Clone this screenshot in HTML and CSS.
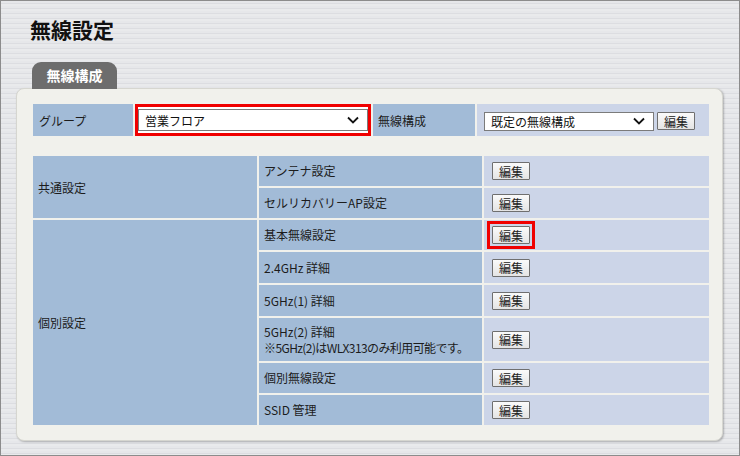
FILE: index.html
```
<!DOCTYPE html>
<html lang="ja">
<head>
    <meta charset="UTF-8">
    <title>無線設定</title>
    <link rel="stylesheet" href="styles.css">
</head>
<body>
    <div class="page">
        <h1 class="title">無線設定</h1>

        <div class="tab">無線構成</div>

        <div class="panel">
            <!-- Group / config selection -->
            <table class="grid top-grid">
                <tr>
                    <td class="label w-group">グループ</td>
                    <td class="select-cell marked">
                        <div class="select-wrap wide">
                            <select><option>営業フロア</option></select>
                            <svg class="chev" width="12" height="8" viewBox="0 0 12 8"><path d="M1 1.5 L6 6.5 L11 1.5" fill="none" stroke="#111" stroke-width="1.8"/></svg>
                        </div>
                    </td>
                    <td class="label w-conf">無線構成</td>
                    <td class="value">
                        <div class="inline">
                            <div class="select-wrap narrow">
                                <select><option>既定の無線構成</option></select>
                                <svg class="chev" width="12" height="8" viewBox="0 0 12 8"><path d="M1 1.5 L6 6.5 L11 1.5" fill="none" stroke="#111" stroke-width="1.8"/></svg>
                            </div>
                            <button class="btn">編集</button>
                        </div>
                    </td>
                </tr>
            </table>

            <!-- Settings list -->
            <table class="grid list-grid">
                <tr>
                    <td class="label col1" rowspan="2">共通設定</td>
                    <td class="label col2">アンテナ設定</td>
                    <td class="value"><button class="btn">編集</button></td>
                </tr>
                <tr>
                    <td class="label col2">セルリカバリーAP設定</td>
                    <td class="value"><button class="btn">編集</button></td>
                </tr>
                <tr>
                    <td class="label col1" rowspan="6">個別設定</td>
                    <td class="label col2">基本無線設定</td>
                    <td class="value"><span class="mark-btn"><button class="btn">編集</button></span></td>
                </tr>
                <tr class="mid">
                    <td class="label col2">2.4GHz 詳細</td>
                    <td class="value"><button class="btn">編集</button></td>
                </tr>
                <tr class="mid">
                    <td class="label col2">5GHz(1) 詳細</td>
                    <td class="value"><button class="btn">編集</button></td>
                </tr>
                <tr class="tall">
                    <td class="label col2">5GHz(2) 詳細<br><span class="note">※5GHz(2)はWLX313のみ利用可能です。</span></td>
                    <td class="value"><button class="btn">編集</button></td>
                </tr>
                <tr>
                    <td class="label col2">個別無線設定</td>
                    <td class="value"><button class="btn">編集</button></td>
                </tr>
                <tr>
                    <td class="label col2">SSID 管理</td>
                    <td class="value"><button class="btn">編集</button></td>
                </tr>
            </table>
        </div>
    </div>
</body>
</html>
```

FILE: styles.css
```
:root {
    --cell-blue: #a2bbd7;
    --cell-light: #ccd5e8;
    --panel: #f1f1ec;
    --mark: #f00000;
}

* {
    box-sizing: border-box;
}

body {
    margin: 0;
    font-family: "Noto Sans CJK JP", "DejaVu Sans", sans-serif;
    font-size: 12px;
    color: #1c1c1c;
}

.page {
    width: 740px;
    height: 456px;
    border: 1px solid #8c8c8c;
    background: repeating-linear-gradient(to bottom, #e6e7ea 0px, #e6e7ea 2px, #dcdde1 2px, #dcdde1 3px, #e9eaec 3px, #e9eaec 5px);
    padding: 15px 16px 0 15px;
    overflow: hidden;
}

.title {
    margin: 0 0 0 14px;
    font-size: 21px;
    line-height: 27px;
    font-weight: bold;
    color: #111;
}

.tab {
    margin: 19px 0 0 16px;
    width: 85px;
    height: 27px;
    background: #6d6d6d;
    border-radius: 9px 9px 0 0;
    color: #fff;
    font-weight: bold;
    font-size: 14px;
    line-height: 26px;
    text-align: center;
    position: relative;
    z-index: 1;
}

.panel {
    width: 707px;
    height: 353px;
    margin-top: -1px;
    background: var(--panel);
    border: 1px solid #d6d6d0;
    border-radius: 8px;
    box-shadow: 1px 1px 2px rgba(0,0,0,0.25);
    padding: 13px 13px 0 14px;
}

.grid {
    border-collapse: separate;
    border-spacing: 2px;
    width: 680px;
    table-layout: fixed;
}

.grid td {
    padding: 0 6px;
    vertical-align: middle;
    white-space: nowrap;
}

.label {
    background: var(--cell-blue);
}

.value {
    background: var(--cell-light);
}

.top-grid td {
    height: 32px;
}

.w-group {
    width: 100px;
}

.w-conf {
    width: 102px;
    padding-left: 5px !important;
}

.select-cell {
    width: 236px;
    border: 3px solid var(--mark);
    background: #fff;
    padding: 0 !important;
}

.select-cell .select-wrap {
    margin: 1px 0 1px 0;
}

.inline {
    display: flex;
    align-items: center;
    gap: 3px;
    margin-left: -1px;
    padding-top: 2px;
}

.select-wrap {
    position: relative;
    height: 22px;
}

.select-wrap.wide {
    width: 230px;
}

.select-wrap.narrow {
    width: 170px;
    height: 19px;
}

select {
    appearance: none;
    -webkit-appearance: none;
    width: 100%;
    height: 100%;
    border: 1px solid #7b7b7b;
    border-radius: 0;
    background: #fff;
    font-family: inherit;
    font-size: 12px;
    color: #111;
    padding: 0 0 0 6px;
    margin: 0;
}

.chev {
    position: absolute;
    right: 9px;
    top: 50%;
    margin-top: -4px;
    pointer-events: none;
}

.list-grid {
    margin-top: 16px;
}

.list-grid td {
    height: 30px;
}

.list-grid .mid td {
    height: 31px;
}

.list-grid .tall td {
    height: 43px;
}

.col1 {
    width: 224px;
    padding-left: 5px !important;
}

.col2 {
    width: 223px;
    line-height: 16px;
    padding-left: 5px !important;
}

.note {
    letter-spacing: -0.6px;
}

.value {
    padding-left: 8px !important;
}

.btn {
    width: 38px;
    height: 18px;
    padding: 0;
    border: 1px solid #6f6f6f;
    border-radius: 1px;
    background: linear-gradient(to bottom, #fafafa, #e4e4e4);
    font-family: inherit;
    font-size: 12px;
    line-height: 15px;
    color: #222;
}

.mark-btn {
    display: inline-block;
    border: 3px solid var(--mark);
    padding: 2px 2px;
    margin-left: -5px;
    line-height: 0;
}
```
